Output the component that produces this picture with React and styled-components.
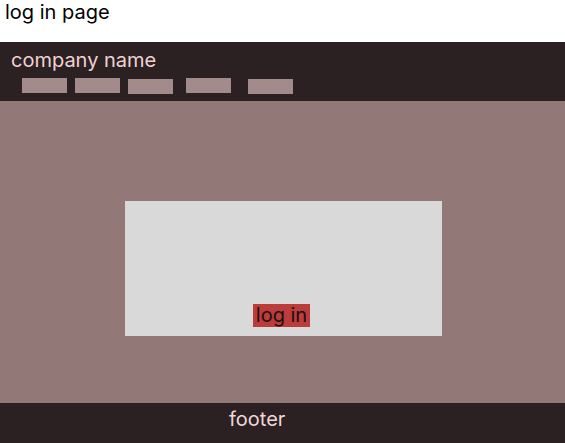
import React from 'react';
import styled, { createGlobalStyle } from 'styled-components';

const GlobalStyle = createGlobalStyle`
  html, body {
    margin: 0;
    padding: 0;
    background: #ffffff;
  }
  body {
    font-family: Inter, 'Noto Sans', sans-serif;
  }
`;

const Page = styled.div`
  display: flex;
  flex-direction: column;
  width: 565px;
  height: 443px;
  overflow: hidden;
`;

const PageTitle = styled.h1`
  margin: 0;
  height: 42px;
  padding: 0 0 0 5px;
  box-sizing: border-box;
  font-size: 20px;
  line-height: 24px;
  font-weight: 400;
  color: #000;
`;

const Header = styled.header`
  height: 59px;
  background: #2b2022;
  padding: 6px 0 0 11px;
  box-sizing: border-box;
`;

const CompanyName = styled.div`
  font-size: 20px;
  color: #f0d2d2;
  line-height: 24px;
`;

const Nav = styled.nav`
  display: flex;
  align-items: flex-start;
  padding-left: 11px;
  margin-top: 6px;
`;

const NavItem = styled.div`
  width: 45px;
  height: 15px;
  background: #a38b8b;
  margin-left: ${({ $gap }) => $gap}px;
  margin-top: ${({ $drop }) => $drop}px;
`;

const Main = styled.main`
  flex: 1;
  background: #937878;
  padding: 100px 0 0 125px;
  box-sizing: border-box;
`;

const Card = styled.div`
  width: 317px;
  height: 135px;
  background: #d9d9d9;
  display: flex;
  align-items: flex-end;
  justify-content: center;
  padding-bottom: 9px;
  box-sizing: border-box;
`;

const LoginButton = styled.button`
  width: 57px;
  height: 23px;
  margin-right: 4px;
  padding: 0;
  border: 0;
  background: #bc3b3b;
  color: #1a1010;
  font-family: Inter, 'Noto Sans', sans-serif;
  font-size: 20px;
  line-height: 23px;
  cursor: pointer;
`;

const Footer = styled.footer`
  height: 40px;
  background: #2b2022;
  color: #f0d8d8;
  font-size: 20px;
  line-height: 32px;
  padding-left: 229px;
  box-sizing: border-box;
`;

const navItems = [
  { gap: 0, drop: 0 },
  { gap: 8, drop: 0 },
  { gap: 8, drop: 1 },
  { gap: 13, drop: 0 },
  { gap: 17, drop: 1 },
];

export default function App() {
  return (
    <>
      <GlobalStyle />
      <Page>
        <PageTitle>log in page</PageTitle>
        <Header>
          <CompanyName>company name</CompanyName>
          <Nav>
            {navItems.map((item, i) => (
              <NavItem key={i} $gap={item.gap} $drop={item.drop} />
            ))}
          </Nav>
        </Header>
        <Main>
          <Card>
            <LoginButton>log in</LoginButton>
          </Card>
        </Main>
        <Footer>footer</Footer>
      </Page>
    </>
  );
}
